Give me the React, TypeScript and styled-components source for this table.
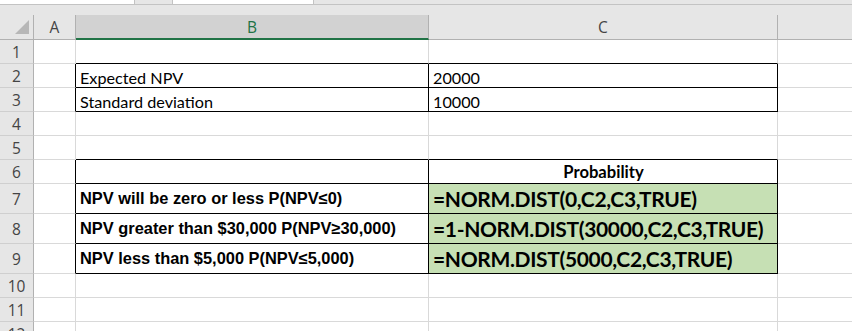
import React from 'react';
import styled, { createGlobalStyle, css } from 'styled-components';

const GRID = '#d9d9d9';
const HEAD_BG = '#e6e6e6';
const HEAD_LINE = '#b1b1b1';
const EXCEL_GREEN = '#217346';

const GlobalStyle = createGlobalStyle`
  html, body {
    margin: 0;
    padding: 0;
    background: #ffffff;
    overflow: hidden;
  }
`;

type Edge = 'grid' | 'black';
type Kind = 'plain' | 'label' | 'formula' | 'heading';

interface CellSpec {
  text?: string;
  r?: Edge;
  b?: Edge;
  kind?: Kind;
  fill?: boolean;
}

const COLUMNS = ['A', 'B', 'C', 'D'];
const ROW_HEIGHTS = [24, 24, 24, 24, 24, 24, 30, 30, 30, 24, 24, 24];

const boxed = (text: string, kind: Kind = 'plain', fill = false): CellSpec => ({
  text,
  kind,
  fill,
  r: 'black',
  b: 'black',
});

const ROWS: CellSpec[][] = [
  [{}, { b: 'black' }, { b: 'black' }, {}],
  [{ r: 'black' }, boxed('Expected NPV'), boxed('20000'), {}],
  [{ r: 'black' }, boxed('Standard deviation'), boxed('10000'), {}],
  [{}, {}, {}, {}],
  [{}, { b: 'black' }, { b: 'black' }, {}],
  [{ r: 'black' }, { r: 'black', b: 'black' }, boxed('Probability', 'heading'), {}],
  [
    { r: 'black' },
    boxed('NPV will be zero or less P(NPV≤0)', 'label'),
    boxed('=NORM.DIST(0,C2,C3,TRUE)', 'formula', true),
    {},
  ],
  [
    { r: 'black' },
    boxed('NPV greater than $30,000 P(NPV≥30,000)', 'label'),
    boxed('=1-NORM.DIST(30000,C2,C3,TRUE)', 'formula', true),
    {},
  ],
  [
    { r: 'black' },
    boxed('NPV less than $5,000 P(NPV≤5,000)', 'label'),
    boxed('=NORM.DIST(5000,C2,C3,TRUE)', 'formula', true),
    {},
  ],
  [{}, {}, {}, {}],
  [{}, {}, {}, {}],
  [{}, {}, {}, {}],
];

const Page = styled.div`
  width: 852px;
  height: 331px;
  overflow: hidden;
  background: ${HEAD_BG};
`;

/* bottom edge of the formula bar above the sheet */
const FormulaBar = styled.div`
  display: flex;
  height: 4px;
  border-bottom: 1px solid #c3c3c3;
  background: ${HEAD_BG};
`;

const BarBox = styled.div<{ $width: number; $offset?: number }>`
  flex: none;
  width: ${(p) => p.$width}px;
  margin-left: ${(p) => p.$offset ?? 0}px;
  background: #ffffff;
  border-left: 1px solid ${(p) => (p.$offset ? '#c3c3c3' : 'transparent')};
  border-right: 1px solid #c3c3c3;
`;

const BarGap = styled.div`
  height: 10px;
  background: ${HEAD_BG};
`;

const Sheet = styled.div`
  display: grid;
  grid-template-columns: 34px 42px 353px 349px 320px;
  grid-template-rows: 25px ${ROW_HEIGHTS.map((h) => `${h}px`).join(' ')};
  background: #ffffff;
`;

const headerText = css`
  font-family: 'Open Sans', 'Noto Sans', sans-serif;
  font-size: 15.5px;
  color: #444444;
`;

const Corner = styled.div`
  box-sizing: border-box;
  background: ${HEAD_BG};
  border-right: 1px solid ${HEAD_LINE};
  border-bottom: 1px solid ${HEAD_LINE};
  display: flex;
  align-items: flex-end;
  justify-content: flex-end;
  padding: 0 3px 4px 0;
`;

const ColHeader = styled.div<{ $selected: boolean }>`
  box-sizing: border-box;
  display: flex;
  align-items: center;
  justify-content: center;
  background: ${(p) => (p.$selected ? '#d2d2d2' : HEAD_BG)};
  border-right: 1px solid ${HEAD_LINE};
  border-bottom: ${(p) => (p.$selected ? `2px solid ${EXCEL_GREEN}` : `1px solid ${HEAD_LINE}`)};
  ${headerText};
  color: ${(p) => (p.$selected ? EXCEL_GREEN : '#444444')};
  padding-top: ${(p) => (p.$selected ? 1 : 0)}px;
`;

const RowHeader = styled.div`
  box-sizing: border-box;
  display: flex;
  align-items: center;
  justify-content: center;
  background: ${HEAD_BG};
  border-right: 1px solid ${HEAD_LINE};
  border-bottom: 1px solid #cfcfcf;
  ${headerText};
  padding-top: 1px;
`;

const kindFont: Record<Kind, ReturnType<typeof css>> = {
  plain: css`
    font-family: Lato, 'Open Sans', sans-serif;
    font-size: 16.2px;
    padding-top: 3px;
  `,
  heading: css`
    font-family: Lato, 'Open Sans', sans-serif;
    font-size: 16.6px;
    font-weight: 700;
    justify-content: center;
  `,
  label: css`
    font-family: 'Liberation Sans', Arial, sans-serif;
    font-size: 16.4px;
    font-weight: 700;
  `,
  formula: css`
    font-family: Lato, 'Open Sans', sans-serif;
    font-size: 21px;
    font-weight: 700;
    letter-spacing: -0.35px;
  `,
};

const Cell = styled.div<{ $r: Edge; $b: Edge; $kind: Kind; $fill: boolean }>`
  box-sizing: border-box;
  display: flex;
  align-items: center;
  padding: 0 3px 0 4px;
  overflow: hidden;
  white-space: nowrap;
  color: #000000;
  background: ${(p) => (p.$fill ? '#c6e0b4' : '#ffffff')};
  border-right: 1px solid ${(p) => (p.$r === 'black' ? '#000000' : GRID)};
  border-bottom: 1px solid ${(p) => (p.$b === 'black' ? '#000000' : GRID)};
  ${(p) => kindFont[p.$kind]};
`;

const SelectAllMark = () => (
  <svg width="16" height="16" viewBox="0 0 16 16" aria-hidden="true">
    <polygon points="1,15 15,15 15,1" fill="#b7b7b7" />
  </svg>
);

export default function App() {
  return (
    <>
      <GlobalStyle />
      <Page>
        <FormulaBar>
          <BarBox $width={133} />
          <BarBox $width={140} $offset={37} />
        </FormulaBar>
        <BarGap />
        <Sheet>
          <Corner>
            <SelectAllMark />
          </Corner>
          {COLUMNS.map((col) => (
            <ColHeader key={col} $selected={col === 'B'}>
              {col}
            </ColHeader>
          ))}
          {ROWS.map((row, i) => (
            <React.Fragment key={i}>
              <RowHeader>{i + 1}</RowHeader>
              {row.map((cell, j) => (
                <Cell
                  key={j}
                  $r={cell.r ?? 'grid'}
                  $b={cell.b ?? 'grid'}
                  $kind={cell.kind ?? 'plain'}
                  $fill={!!cell.fill}
                >
                  {cell.text}
                </Cell>
              ))}
            </React.Fragment>
          ))}
        </Sheet>
      </Page>
    </>
  );
}
